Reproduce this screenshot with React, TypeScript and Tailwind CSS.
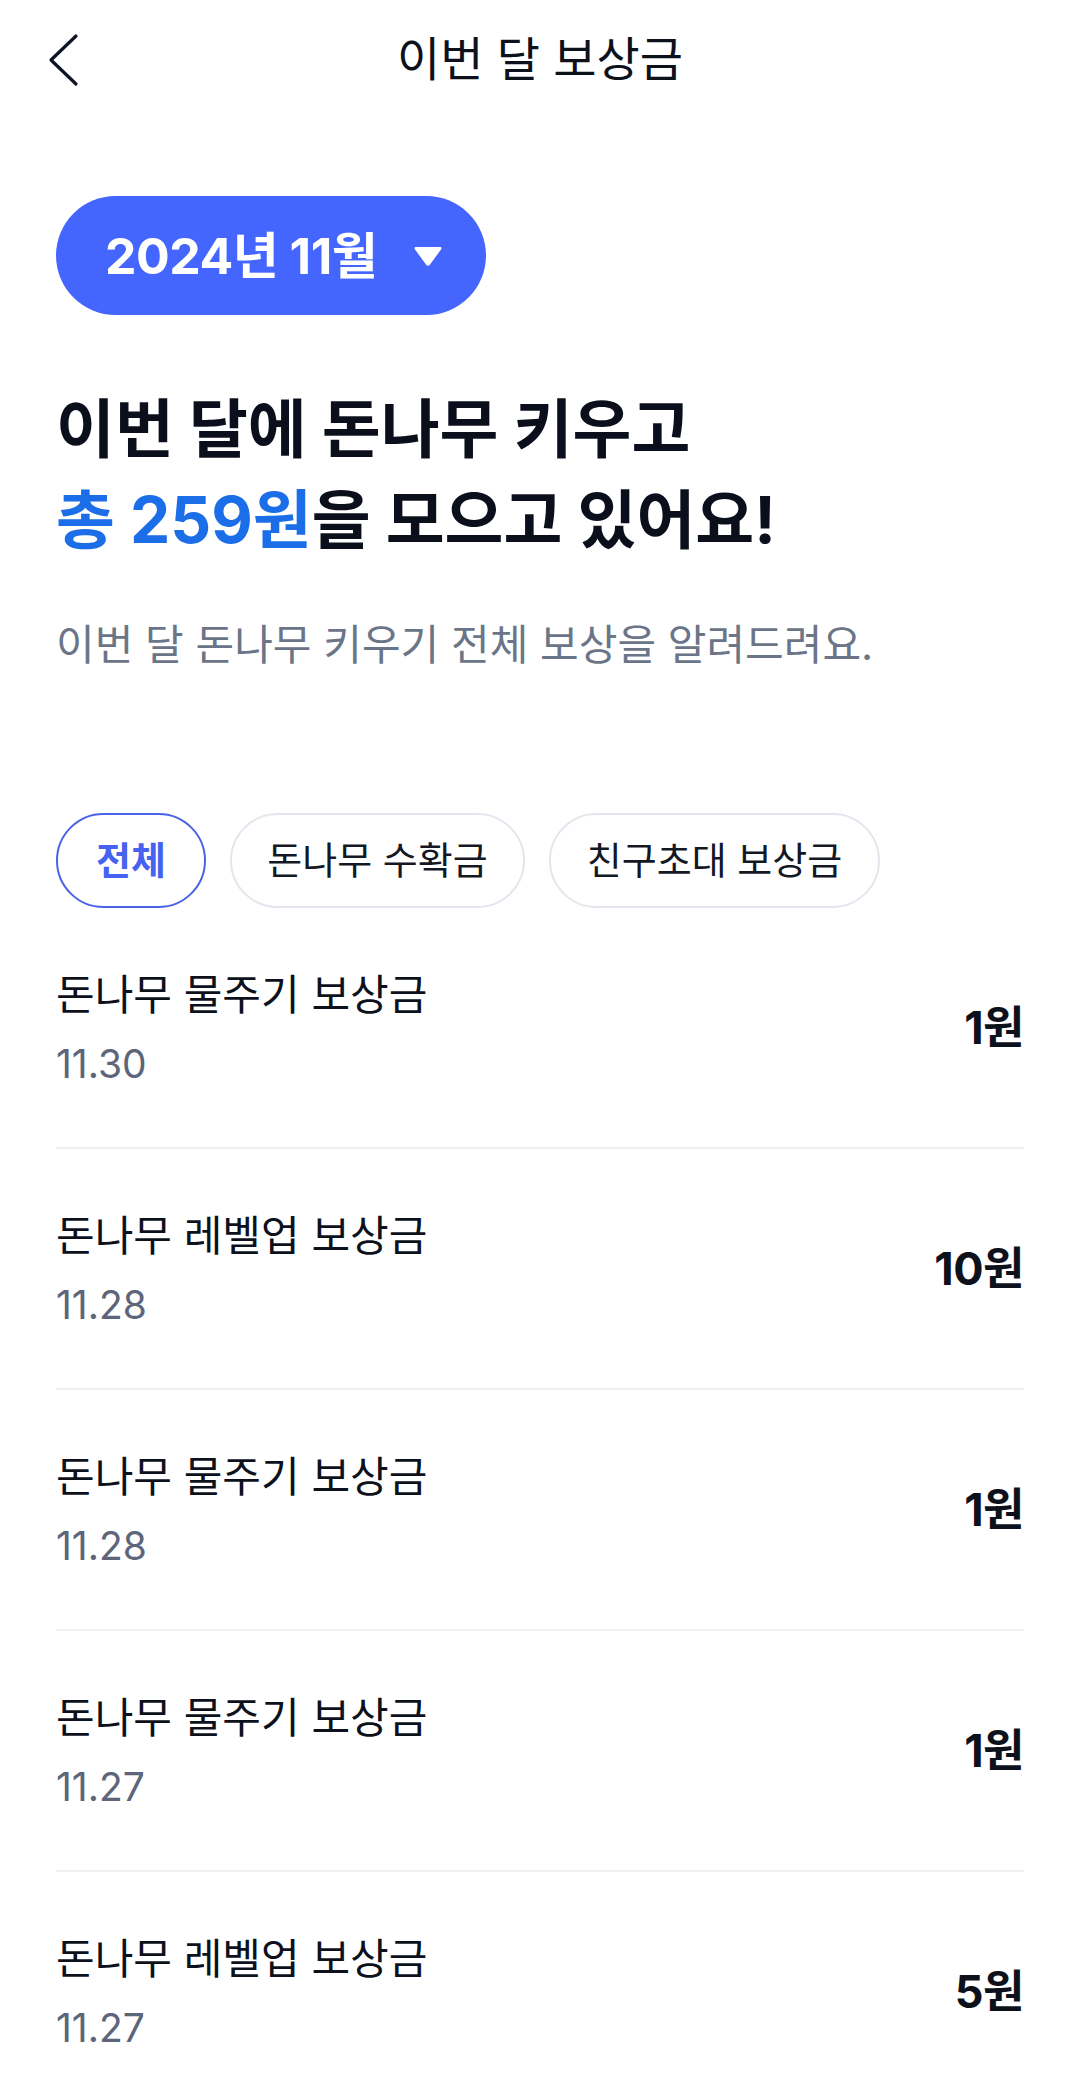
import React from 'react';

type Reward = {
    title: string;
    date: string;
    amount: string;
};

const rewards: Reward[] = [
    { title: '돈나무 물주기 보상금', date: '11.30', amount: '1원' },
    { title: '돈나무 레벨업 보상금', date: '11.28', amount: '10원' },
    { title: '돈나무 물주기 보상금', date: '11.28', amount: '1원' },
    { title: '돈나무 물주기 보상금', date: '11.27', amount: '1원' },
    { title: '돈나무 레벨업 보상금', date: '11.27', amount: '5원' },
];

const FONT = "font-['Inter','Noto_Sans_CJK_KR',sans-serif]";

function BackIcon() {
    return (
        <svg width="32" height="56" viewBox="0 0 32 56" fill="none">
            <path d="M28 4 L3 28 L28 52" stroke="#0f1424" strokeWidth="3.2" strokeLinecap="round" strokeLinejoin="round" />
        </svg>
    );
}

function Caret() {
    return (
        <svg width="30" height="22" viewBox="0 0 30 22">
            <path d="M3 2 H27 Q29.5 2 28 4.5 L17 19.5 Q15 22 13 19.5 L2 4.5 Q0.5 2 3 2 Z" fill="#ffffff" />
        </svg>
    );
}

export default function App() {
    return (
        <div className={`${FONT} min-h-screen w-full bg-white text-[#0d111c]`}>
            {/* 헤더 */}
            <header className="grid h-[117px] grid-cols-[1fr_auto_1fr] items-center">
                <div className="pl-[48px] pt-[2px]">
                    <BackIcon />
                </div>
                <h1 className="text-[47px] leading-[60px] text-[#0d111c]">이번 달 보상금</h1>
                <div />
            </header>

            <main className="px-[56px]">
                <button className="mt-[79px] flex h-[119px] w-[430px] items-center rounded-full bg-[#4566fe] pl-[49px] text-white">
                    <span className="text-[50px] font-bold leading-none tracking-[-0.5px]">2024년 11월</span>
                    <span className="ml-auto mr-[43px] flex">
                        <Caret />
                    </span>
                </button>

                <h2 className="mt-[68px] text-[64px] font-bold leading-[91px] text-[#0b0f1c]">
                    이번 달에 돈나무 키우고
                    <br />
                    <span className="text-[#1b6ee8]">총 259원</span>을 모으고 있어요!
                </h2>

                <p className="mt-[52px] text-[42px] leading-[56px] text-[#6b7588]">
                    이번 달 돈나무 키우기 전체 보상을 알려드려요.
                </p>

                <div className="mt-[140px] flex gap-[24px]">
                    <div className="flex h-[95px] w-[150px] items-center justify-center rounded-full border-2 border-[#4a63e6] text-[38px] font-bold text-[#4563f0]">
                        전체
                    </div>
                    <div className="flex h-[95px] w-[295px] items-center justify-center rounded-full border-2 border-[#e3e6ee] text-[38px] text-[#141824]">
                        돈나무 수확금
                    </div>
                    <div className="flex h-[95px] w-[331px] items-center justify-center rounded-full border-2 border-[#e3e6ee] text-[38px] text-[#141824]">
                        친구초대 보상금
                    </div>
                </div>

                <ul>
                    {rewards.map((r, i) => (
                        <li key={i} className="flex h-[241px] items-center justify-between border-b-2 border-[#eef0f4]">
                            <div className="flex flex-col">
                                <span className="text-[42px] leading-[54px] text-[#0d111c]">{r.title}</span>
                                <span className="mt-[19px] text-[39px] leading-[46px] text-[#5c6579]">{r.date}</span>
                            </div>
                            <span className="text-[45px] font-bold leading-none tracking-[-0.5px] text-[#0d111c]">{r.amount}</span>
                        </li>
                    ))}
                </ul>
            </main>
        </div>
    );
}
